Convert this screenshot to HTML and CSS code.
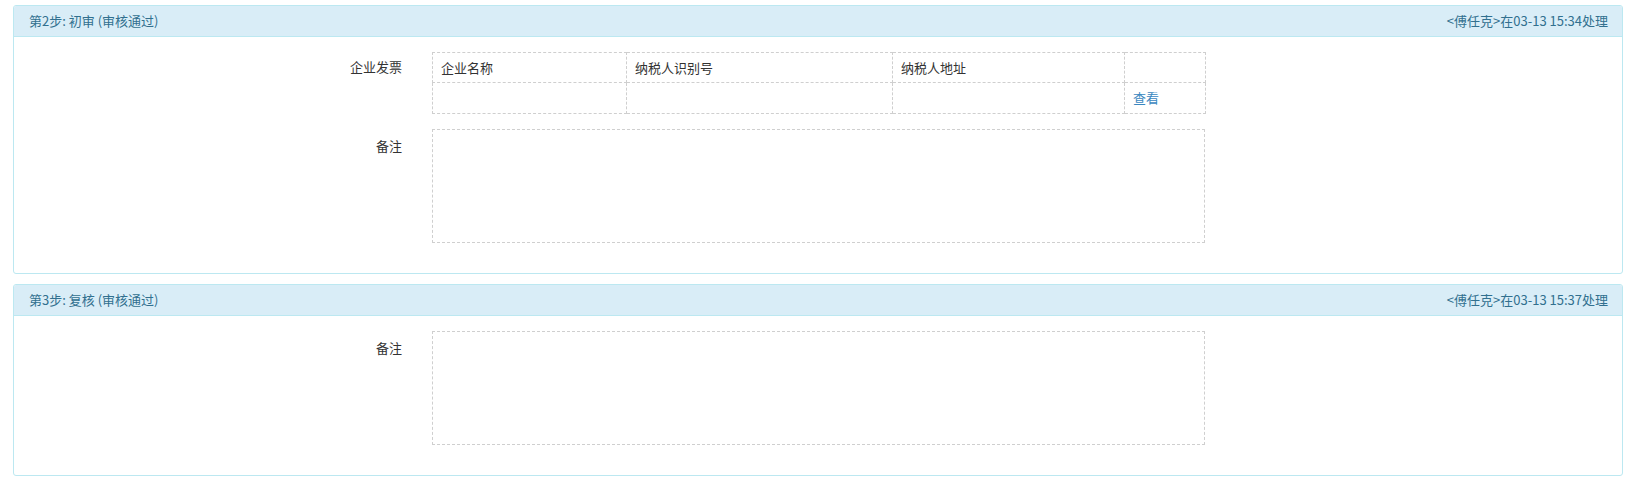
FILE: index.html
```html
<!DOCTYPE html>
<html lang="zh-CN">
<head>
<meta charset="utf-8">
<title>审核流程</title>
<link rel="stylesheet" href="styles.css">
</head>
<body>
<div class="page">
  <section class="panel">
    <div class="panel-heading">
      <span class="panel-title">第2步: 初审 (审核通过)</span>
      <span class="panel-meta">&lt;傅任克&gt;在03-13 15:34处理</span>
    </div>
    <div class="panel-body">
      <div class="form-row">
        <div class="form-label">企业发票</div>
        <div class="form-field">
          <table class="invoice">
            <colgroup>
              <col class="c1"><col class="c2"><col class="c3"><col class="c4">
            </colgroup>
            <tr>
              <td>企业名称</td>
              <td>纳税人识别号</td>
              <td>纳税人地址</td>
              <td></td>
            </tr>
            <tr class="data-row">
              <td></td>
              <td></td>
              <td></td>
              <td><a class="link" href="#">查看</a></td>
            </tr>
          </table>
        </div>
      </div>
      <div class="form-row">
        <div class="form-label label-remark">备注</div>
        <div class="form-field">
          <div class="remark"></div>
        </div>
      </div>
    </div>
  </section>

  <section class="panel">
    <div class="panel-heading">
      <span class="panel-title">第3步: 复核 (审核通过)</span>
      <span class="panel-meta">&lt;傅任克&gt;在03-13 15:37处理</span>
    </div>
    <div class="panel-body">
      <div class="form-row">
        <div class="form-label label-remark">备注</div>
        <div class="form-field">
          <div class="remark"></div>
        </div>
      </div>
    </div>
  </section>
</div>
</body>
</html>
```

FILE: styles.css
```css
* {
  box-sizing: border-box;
}

html, body {
  margin: 0;
  padding: 0;
  background: #ffffff;
}

body {
  font-family: "Noto Sans CJK SC", "Noto Sans", "Liberation Sans", sans-serif;
  font-size: 13px;
  color: #333333;
}

.page {
  padding: 5px 9px 0 13px;
}

.panel {
  border: 1px solid #bce8f1;
  border-radius: 3px;
  margin-bottom: 10px;
  background: #ffffff;
}

.panel-heading {
  display: flex;
  justify-content: space-between;
  align-items: center;
  height: 31px;
  padding: 0 14px 0 15px;
  background: #d9edf7;
  border-bottom: 1px solid #bce8f1;
  border-radius: 2px 2px 0 0;
  color: #31708f;
  line-height: 20px;
}

.panel-body {
  padding: 15px 0 15px 0;
}

.form-row {
  display: flex;
  gap: 30px;
  margin-bottom: 15px;
}

.form-label {
  width: 388px;
  text-align: right;
  padding-top: 5px;
  line-height: 20px;
}

.label-remark {
  padding-top: 7px;
}

.form-field {
  width: 773px;
}

.invoice {
  width: 773px;
  border-collapse: collapse;
  table-layout: fixed;
}

.invoice .c1 { width: 194px; }
.invoice .c2 { width: 266px; }
.invoice .c3 { width: 232px; }
.invoice .c4 { width: 81px; }

.invoice td {
  border: 1px dashed #cfcfcf;
  height: 30px;
  padding: 0 8px;
  line-height: 20px;
  vertical-align: middle;
}

.invoice .data-row td {
  height: 31px;
}

.link {
  color: #3a87c0;
  text-decoration: none;
}

.remark {
  width: 773px;
  height: 114px;
  border: 1px dashed #cfcfcf;
}
```
